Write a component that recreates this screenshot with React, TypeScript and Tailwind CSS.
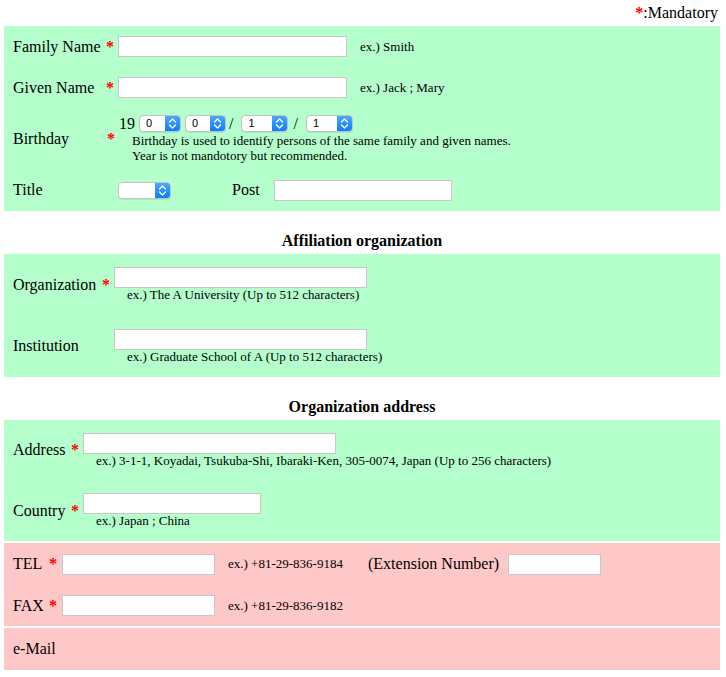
import React from 'react';

const serif = "font-['Liberation_Serif','Times_New_Roman',serif]";

function Star() {
    return <span className="font-bold text-[#ff0000]">*</span>;
}

function TextBox({ className = '' }: { className?: string }) {
    return <div className={`h-[21px] shrink-0 border border-[#c8c8c8] bg-white ${className}`} />;
}

function Select({ width, value }: { width: string; value?: string }) {
    return (
        <div
            className={`flex h-[17px] shrink-0 overflow-hidden rounded-[4px] border border-[#c3c3c3] bg-white shadow-[0_1px_0_rgba(0,0,0,0.08)] ${width}`}>
            <span className="flex-1 pl-[6px] font-['Liberation_Sans',Arial,sans-serif] text-[11px] leading-[15px] text-black">
                {value}
            </span>
            <span className="flex w-[15px] items-center justify-center bg-gradient-to-b from-[#48a8ff] to-[#0a7cff]">
                <svg width="9" height="13" viewBox="0 0 9 13" fill="none">
                    <path d="M1.5 5 L4.5 2 L7.5 5" stroke="white" strokeWidth="1.3" strokeLinecap="round" strokeLinejoin="round" />
                    <path d="M1.5 8 L4.5 11 L7.5 8" stroke="white" strokeWidth="1.3" strokeLinecap="round" strokeLinejoin="round" />
                </svg>
            </span>
        </div>
    );
}

function Row({
    label,
    labelWidth,
    starWidth,
    required,
    height,
    children,
}: {
    label: string;
    labelWidth: string;
    starWidth: string;
    required?: boolean;
    height: string;
    children?: React.ReactNode;
}) {
    return (
        <div className={`flex items-center pl-[9px] ${height}`}>
            <div className={`shrink-0 text-[16px] leading-[18px] ${labelWidth}`}>{label}</div>
            <div className={`shrink-0 text-[16px] leading-[18px] ${starWidth}`}>{required && <Star />}</div>
            {children}
        </div>
    );
}

function Hint({ children, className = '' }: { children: React.ReactNode; className?: string }) {
    return <div className={`text-[13px] leading-[14px] ${className}`}>{children}</div>;
}

function SectionTitle({ children }: { children: React.ReactNode }) {
    return (
        <div className="flex h-[43px] items-end justify-center pb-[4px] text-[16px] leading-[18px] font-bold">
            {children}
        </div>
    );
}

export default function App() {
    return (
        <div className={`ml-[4px] w-[716px] text-black ${serif}`}>
            <div className="flex h-[26px] items-center justify-end pr-[2px] text-[16px]">
                <Star />:Mandatory
            </div>

            <section className="bg-[#b4ffcc]">
                <Row label="Family Name" labelWidth="w-[93px]" starWidth="w-[12px]" required height="h-[41px]">
                    <TextBox className="w-[229px]" />
                    <Hint className="ml-[13px]">ex.) Smith</Hint>
                </Row>
                <Row label="Given Name" labelWidth="w-[93px]" starWidth="w-[12px]" required height="h-[41px]">
                    <TextBox className="w-[229px]" />
                    <Hint className="ml-[13px]">ex.) Jack ; Mary</Hint>
                </Row>
                <Row label="Birthday" labelWidth="w-[94px]" starWidth="w-[11px]" required height="h-[61px]">
                    <div className="flex flex-col">
                        <div className="flex h-[18px] items-center text-[16px]">
                            <span className="ml-[1px] leading-[18px]">19</span>
                            <Select width="ml-[4px] w-[42px]" value="0" />
                            <Select width="ml-[4px] w-[41px]" value="0" />
                            <span className="ml-[3px]">/</span>
                            <Select width="ml-[8px] w-[47px]" value="1" />
                            <span className="ml-[5px]">/</span>
                            <Select width="ml-[8px] w-[47px]" value="1" />
                        </div>
                        <div className="pl-[14px] text-[13px] leading-[15px]">
                            <div>Birthday is used to identify persons of the same family and given names.</div>
                            <div>Year is not mandotory but recommended.</div>
                        </div>
                    </div>
                </Row>
                <Row label="Title" labelWidth="w-[93px]" starWidth="w-[12px]" height="h-[42px]">
                    <Select width="w-[53px]" />
                    <span className="ml-[61px] text-[16px]">Post</span>
                    <TextBox className="ml-[14px] w-[178px]" />
                </Row>
            </section>

            <SectionTitle>Affiliation organization</SectionTitle>

            <section className="bg-[#b4ffcc]">
                <Row label="Organization" labelWidth="w-[89px]" starWidth="w-[12px]" required height="h-[61px]">
                    <div className="flex flex-col">
                        <TextBox className="w-[253px]" />
                        <Hint className="pl-[13px]">ex.) The A University (Up to 512 characters)</Hint>
                    </div>
                </Row>
                <Row label="Institution" labelWidth="w-[89px]" starWidth="w-[12px]" height="h-[62px]">
                    <div className="flex flex-col">
                        <TextBox className="w-[253px]" />
                        <Hint className="pl-[13px]">ex.) Graduate School of A (Up to 512 characters)</Hint>
                    </div>
                </Row>
            </section>

            <SectionTitle>Organization address</SectionTitle>

            <section className="bg-[#b4ffcc]">
                <Row label="Address" labelWidth="w-[58px]" starWidth="w-[12px]" required height="h-[60px]">
                    <div className="flex flex-col">
                        <TextBox className="w-[253px]" />
                        <Hint className="pl-[13px]">
                            ex.) 3-1-1, Koyadai, Tsukuba-Shi, Ibaraki-Ken, 305-0074, Japan (Up to 256 characters)
                        </Hint>
                    </div>
                </Row>
                <Row label="Country" labelWidth="w-[58px]" starWidth="w-[12px]" required height="h-[61px]">
                    <div className="flex flex-col">
                        <TextBox className="w-[178px]" />
                        <Hint className="pl-[13px]">ex.) Japan ; China</Hint>
                    </div>
                </Row>
            </section>

            <section className="mt-[2px] bg-[#ffc8c8]">
                <Row label="TEL" labelWidth="w-[36px]" starWidth="w-[13px]" required height="h-[42px]">
                    <TextBox className="w-[153px]" />
                    <Hint className="ml-[13px] w-[140px]">ex.) +81-29-836-9184</Hint>
                    <span className="text-[16px]">(Extension Number)</span>
                    <TextBox className="ml-[9px] w-[93px]" />
                </Row>
                <Row label="FAX" labelWidth="w-[36px]" starWidth="w-[13px]" required height="h-[41px]">
                    <TextBox className="w-[153px]" />
                    <Hint className="ml-[13px]">ex.) +81-29-836-9182</Hint>
                </Row>
            </section>

            <section className="mt-[2px] bg-[#ffc8c8]">
                <Row label="e-Mail" labelWidth="w-[60px]" starWidth="w-[0px]" height="h-[42px]" />
            </section>
        </div>
    );
}
